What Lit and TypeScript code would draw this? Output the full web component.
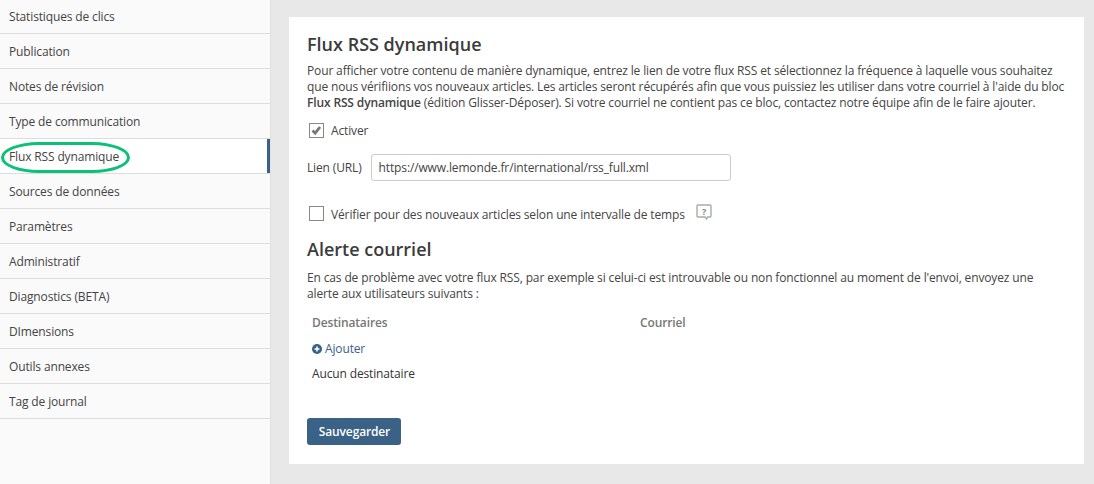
import { LitElement, html, css, svg } from 'lit'
import { customElement } from 'lit/decorators.js'

const NAV = [
  'Statistiques de clics',
  'Publication',
  'Notes de révision',
  'Type de communication',
  'Flux RSS dynamique',
  'Sources de données',
  'Paramètres',
  'Administratif',
  'Diagnostics (BETA)',
  'DImensions',
  'Outils annexes',
  'Tag de journal',
]
const ACTIVE = 'Flux RSS dynamique'

@customElement('app-root')
export class AppRoot extends LitElement {
  static styles = css`
    :host {
      display: flex;
      width: 1094px;
      height: 484px;
      overflow: hidden;
      background: #e8e8e8;
      font-family: 'Open Sans', sans-serif;
      font-size: 12px;
      line-height: 17px;
      letter-spacing: -0.14px;
      color: #444;
    }
    .side {
      width: 270px;
      flex: none;
      background: #fafafa;
      border-right: 1px solid #e0e0e0;
    }
    .item {
      position: relative;
      height: 35px;
      box-sizing: border-box;
      padding: 1px 0 0 9px;
      margin-top: -1px;
      margin-bottom: 1px;
      display: flex;
      align-items: center;
      border-bottom: 1px solid #ddd;
    }
    .item.active {
      background: #fff;
    }
    .item.active::after {
      content: '';
      position: absolute;
      right: 0;
      top: 0;
      bottom: 0;
      width: 3px;
      background: #3a6186;
    }
    .ring {
      position: absolute;
      left: 1px;
      top: 3px;
      width: 129px;
      height: 31px;
      box-sizing: border-box;
      border: 3.5px solid #0cc078;
      border-radius: 38px / 15.5px;
    }
    .main {
      flex: none;
      box-sizing: border-box;
      width: 795px;
      height: 447px;
      margin: 17px 0 0 18px;
      padding: 17px 18px 0;
      background: #fff;
    }
    h2 {
      margin: 0;
      font-size: 18px;
      line-height: 20px;
      font-weight: 600;
      letter-spacing: 0;
      color: #3c3c3c;
    }
    p {
      margin: 0;
      line-height: 16px;
    }
    .intro {
      margin-top: 9px;
    }
    b {
      font-weight: 600;
    }
    .check {
      display: flex;
      align-items: center;
      gap: 7px;
      padding-left: 2px;
    }
    .box {
      box-sizing: border-box;
      width: 15px;
      height: 15px;
      border: 1px solid #888;
      display: flex;
      flex: none;
    }
    .activer {
      margin-top: 11px;
    }
    .url {
      display: flex;
      align-items: center;
      gap: 9px;
      margin-top: 15px;
    }
    .field {
      box-sizing: border-box;
      width: 360px;
      height: 27px;
      border: 1px solid #ccc;
      border-radius: 3px;
      padding: 0 7px;
      display: flex;
      align-items: center;
    }
    .verify {
      margin-top: 25px;
    }
    .verify .box {
      margin-top: -2px;
    }
    .help {
      margin-top: -6px;
      margin-left: 4px;
    }
    .alert {
      margin-top: 16px;
    }
    .notice {
      margin-top: 11px;
    }
    .cols {
      display: grid;
      grid-template-columns: 328px 1fr;
      margin-top: 12px;
      padding-left: 5px;
      color: #777;
      font-weight: 600;
    }
    .add {
      display: flex;
      align-items: center;
      gap: 3px;
      margin-top: 9px;
      padding-left: 5px;
      color: #3a6186;
    }
    .none {
      margin-top: 8px;
      padding-left: 5px;
      color: #333;
    }
    button {
      display: block;
      margin-top: 36px;
      padding: 0 0 0 1px;
      width: 94px;
      height: 27px;
      border: 0;
      border-radius: 3px;
      background: #3a6186;
      color: #fff;
      font: 600 12px 'Open Sans', sans-serif;
      letter-spacing: -0.14px;
    }
  `

  private renderCheckMark() {
    return svg`<svg width="13" height="13" viewBox="0 0 13 13">
      <path d="M2.5 6.5 L5.2 9.2 L10 3" fill="none" stroke="#777" stroke-width="2.8"/>
    </svg>`
  }

  render() {
    return html`
      <nav class="side">
        ${NAV.map(
          (label) => html`
            <div class="item ${label === ACTIVE ? 'active' : ''}">
              ${label}
              ${label === ACTIVE ? html`<span class="ring"></span>` : ''}
            </div>
          `,
        )}
      </nav>
      <main class="main">
        <h2>Flux RSS dynamique</h2>
        <p class="intro">
          Pour afficher votre contenu de manière dynamique, entrez le lien de votre flux RSS et sélectionnez la
          fréquence à laquelle vous souhaitez que nous vérifiions vos nouveaux articles. Les articles seront
          récupérés afin que vous puissiez les utiliser dans votre courriel à l'aide du bloc
          <b>Flux RSS dynamique</b> (édition Glisser-Déposer). Si votre courriel ne contient pas ce bloc, contactez
          notre équipe afin de le faire ajouter.
        </p>
        <div class="check activer">
          <span class="box">${this.renderCheckMark()}</span>
          Activer
        </div>
        <div class="url">
          Lien (URL)
          <div class="field">https://www.lemonde.fr/international/rss_full.xml</div>
        </div>
        <div class="check verify">
          <span class="box"></span>
          Vérifier pour des nouveaux articles selon une intervalle de temps
          <svg class="help" width="16" height="16" viewBox="0 0 16 16">
            <path d="M2 1 H14 a1 1 0 0 1 1 1 V12 a1 1 0 0 1 -1 1 H11.5 L10.5 15 L9 13 H2 a1 1 0 0 1 -1 -1 V2 a1 1 0 0 1 1 -1 Z" fill="none" stroke="#aaa" stroke-width="1.4"/>
            <text x="8" y="10.5" font-size="9" font-weight="700" text-anchor="middle" fill="#888" font-family="Open Sans">?</text>
          </svg>
        </div>
        <h2 class="alert">Alerte courriel</h2>
        <p class="notice">
          En cas de problème avec votre flux RSS, par exemple si celui-ci est introuvable ou non fonctionnel au
          moment de l'envoi, envoyez une<br />alerte aux utilisateurs suivants :
        </p>
        <div class="cols"><span>Destinataires</span><span>Courriel</span></div>
        <div class="add">
          <svg width="10" height="10" viewBox="0 0 10 10">
            <circle cx="5" cy="5" r="5" fill="#3a6186"/>
            <path d="M5 2.5 V7.5 M2.5 5 H7.5" stroke="#fff" stroke-width="1.6"/>
          </svg>
          Ajouter
        </div>
        <div class="none">Aucun destinataire</div>
        <button>Sauvegarder</button>
      </main>
    `
  }
}
